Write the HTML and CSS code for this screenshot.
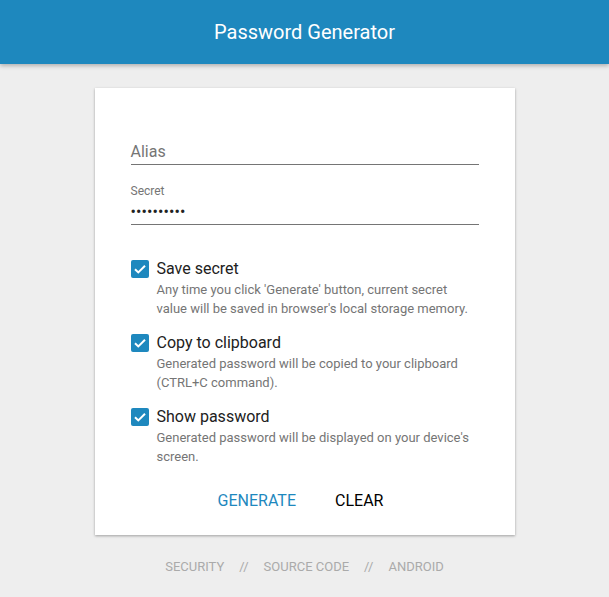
FILE: index.html
```html
<!DOCTYPE html>
<html>
<head>
<meta charset="utf-8">
<link rel="stylesheet" href="styles.css">
</head>
<body>
<header class="topbar"><h1 class="title">Password Generator</h1></header>
<main class="main">
  <section class="card">
    <div class="field field-alias">
      <div class="field-value placeholder">Alias</div>
    </div>
    <div class="field field-secret">
      <div class="field-label">Secret</div>
      <div class="field-value dots">••••••••••</div>
    </div>
    <div class="options">
      <div class="option">
        <span class="check"><svg viewBox="0 0 18 18" width="18" height="18"><path d="M4 9.2l3.3 3.2L14 5.8" fill="none" stroke="#fff" stroke-width="2"/></svg></span>
        <div class="option-text">
          <div class="option-label">Save secret</div>
          <div class="option-desc">Any time you click 'Generate' button, current secret value will be saved in browser's local storage memory.</div>
        </div>
      </div>
      <div class="option">
        <span class="check"><svg viewBox="0 0 18 18" width="18" height="18"><path d="M4 9.2l3.3 3.2L14 5.8" fill="none" stroke="#fff" stroke-width="2"/></svg></span>
        <div class="option-text">
          <div class="option-label">Copy to clipboard</div>
          <div class="option-desc">Generated password will be copied to your clipboard (CTRL+C command).</div>
        </div>
      </div>
      <div class="option">
        <span class="check"><svg viewBox="0 0 18 18" width="18" height="18"><path d="M4 9.2l3.3 3.2L14 5.8" fill="none" stroke="#fff" stroke-width="2"/></svg></span>
        <div class="option-text">
          <div class="option-label">Show password</div>
          <div class="option-desc">Generated password will be displayed on your device's screen.</div>
        </div>
      </div>
    </div>
    <div class="actions">
      <button class="btn btn-primary">Generate</button>
      <button class="btn">Clear</button>
    </div>
  </section>
  <nav class="footer">
    <a class="flink">Security</a><span class="sep">//</span><a class="flink">Source code</a><span class="sep">//</span><a class="flink">Android</a>
  </nav>
</main>
</body>
</html>
```
FILE: styles.css
```css
html, body { margin: 0; padding: 0; }
body {
  background: #eeeeee;
  font-family: Roboto, "Liberation Sans", sans-serif;
  height: 597px;
  overflow: hidden;
}
.topbar {
  height: 64px;
  background: #1e88be;
  box-shadow: 0 2px 4px rgba(0,0,0,0.25);
  display: flex;
  align-items: center;
  justify-content: center;
  position: relative;
}
.title {
  margin: 0;
  color: #fff;
  font-weight: 400;
  font-size: 20px;
}
.main {
  display: flex;
  flex-direction: column;
  align-items: center;
  padding-top: 24px;
}
.card {
  width: 420px;
  box-sizing: border-box;
  background: #fff;
  padding: 36px 36px 0 36px;
  height: 447px;
  box-shadow: 0 1px 3px rgba(0,0,0,0.2), 0 1px 2px rgba(0,0,0,0.15);
}
.field {
  border-bottom: 1px solid #757575;
}
.field-alias { padding-top: 18px; padding-bottom: 2px; }
.field-secret { margin-top: 19px; padding-bottom: 2px; }
.field-value {
  font-size: 16px;
  line-height: 20px;
  height: 20px;
  color: #212121;
}
.placeholder { color: #757575; }
.field-label {
  font-size: 12px;
  line-height: 14px;
  color: #757575;
  margin-bottom: 4px;
}
.dots { font-size: 16px; letter-spacing: 0.1px; color: #212121; }
.options { margin-top: 35px; display: flex; flex-direction: column; gap: 16px; }
.option { display: flex; align-items: flex-start; gap: 8px; }
.check {
  width: 18px; height: 18px;
  background: #1e88be;
  border-radius: 2px;
  display: block;
  flex: none;
}
.check svg { display: block; }
.option-label {
  font-size: 16px;
  line-height: 18px;
  color: #212121;
  margin-top: 0px;
}
.option-desc {
  font-size: 13px;
  line-height: 19px;
  color: #757575;
  margin-top: 2px;
}
.actions {
  display: flex;
  justify-content: center;
  gap: 7px;
  margin-top: 17px;
  padding-right: 8px;
}
.btn {
  background: none;
  border: none;
  font-family: inherit;
  font-size: 16px;
  text-transform: uppercase;
  color: #000;
  padding: 0 16px;
  height: 36px;
  line-height: 36px;
}
.btn-primary { color: #1e88be; }
.footer {
  margin-top: 24px;
  display: flex;
  gap: 15px;
  font-size: 13px;
  color: #aaaaaa;
  text-transform: uppercase;
}
.flink { color: #aaaaaa; }
.sep { color: #aaaaaa; }
```
